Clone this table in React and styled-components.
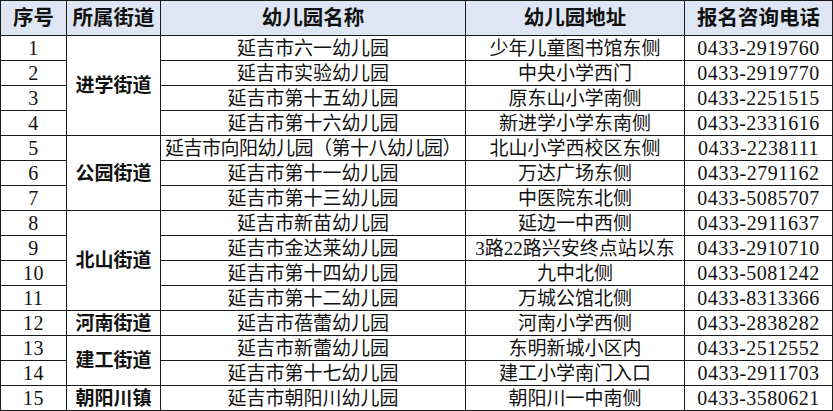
import React from "react";
import styled, { createGlobalStyle } from "styled-components";

const GlobalStyle = createGlobalStyle`
  html, body {
    margin: 0;
    padding: 0;
    background: #ffffff;
  }
  body {
    font-family: "Liberation Serif", "Noto Sans CJK SC", serif;
    color: #111;
  }
`;

const Table = styled.table`
  border-collapse: collapse;
  table-layout: fixed;
  width: 832px;
  font-size: 19px;
  line-height: 1;
`;

const HeadRow = styled.tr`
  height: 35px;
  background: #dde6f2;
`;

const Row = styled.tr`
  height: 25px;
`;

const HeadCell = styled.th`
  border: 1px solid #1a1a1a;
  padding: 0;
  font-size: 20.5px;
  font-weight: 700;
  text-align: center;
  white-space: nowrap;
  color: #111;
`;

const Cell = styled.td`
  border: 1px solid #1a1a1a;
  padding: 0;
  text-align: center;
  white-space: nowrap;
  font-weight: ${props => (props.bold ? 700 : 400)};
  font-size: ${props => (props.num ? "20px" : "19px")};
  letter-spacing: ${props =>
    props.tight ? "-0.5px" : props.num ? "0.5px" : "0"};
`;

const columns = [66, 94, 305, 219, 148];

const rows = [
  { no: 1, district: "进学街道", span: 4, name: "延吉市六一幼儿园", addr: "少年儿童图书馆东侧", tel: "0433-2919760" },
  { no: 2, name: "延吉市实验幼儿园", addr: "中央小学西门", tel: "0433-2919770" },
  { no: 3, name: "延吉市第十五幼儿园", addr: "原东山小学南侧", tel: "0433-2251515" },
  { no: 4, name: "延吉市第十六幼儿园", addr: "新进学小学东南侧", tel: "0433-2331616" },
  { no: 5, district: "公园街道", span: 3, name: "延吉市向阳幼儿园（第十八幼儿园）", addr: "北山小学西校区东侧", tel: "0433-2238111", tight: true },
  { no: 6, name: "延吉市第十一幼儿园", addr: "万达广场东侧", tel: "0433-2791162" },
  { no: 7, name: "延吉市第十三幼儿园", addr: "中医院东北侧", tel: "0433-5085707" },
  { no: 8, district: "北山街道", span: 4, name: "延吉市新苗幼儿园", addr: "延边一中西侧", tel: "0433-2911637" },
  { no: 9, name: "延吉市金达莱幼儿园", addr: "3路22路兴安终点站以东", tel: "0433-2910710" },
  { no: 10, name: "延吉市第十四幼儿园", addr: "九中北侧", tel: "0433-5081242" },
  { no: 11, name: "延吉市第十二幼儿园", addr: "万城公馆北侧", tel: "0433-8313366" },
  { no: 12, district: "河南街道", span: 1, name: "延吉市蓓蕾幼儿园", addr: "河南小学西侧", tel: "0433-2838282" },
  { no: 13, district: "建工街道", span: 2, name: "延吉市新蕾幼儿园", addr: "东明新城小区内", tel: "0433-2512552" },
  { no: 14, name: "延吉市第十七幼儿园", addr: "建工小学南门入口", tel: "0433-2911703" },
  { no: 15, district: "朝阳川镇", span: 1, name: "延吉市朝阳川幼儿园", addr: "朝阳川一中南侧", tel: "0433-3580621" },
];

export default function App() {
  return (
    <>
      <GlobalStyle />
      <Table>
        <colgroup>
          {columns.map((w, i) => (
            <col key={i} style={{ width: w }} />
          ))}
        </colgroup>
        <thead>
          <HeadRow>
            <HeadCell>序号</HeadCell>
            <HeadCell>所属街道</HeadCell>
            <HeadCell>幼儿园名称</HeadCell>
            <HeadCell>幼儿园地址</HeadCell>
            <HeadCell>报名咨询电话</HeadCell>
          </HeadRow>
        </thead>
        <tbody>
          {rows.map(r => (
            <Row key={r.no}>
              <Cell num>{r.no}</Cell>
              {r.district && (
                <Cell bold rowSpan={r.span}>
                  {r.district}
                </Cell>
              )}
              <Cell tight={r.tight}>{r.name}</Cell>
              <Cell>{r.addr}</Cell>
              <Cell num>{r.tel}</Cell>
            </Row>
          ))}
        </tbody>
      </Table>
    </>
  );
}
